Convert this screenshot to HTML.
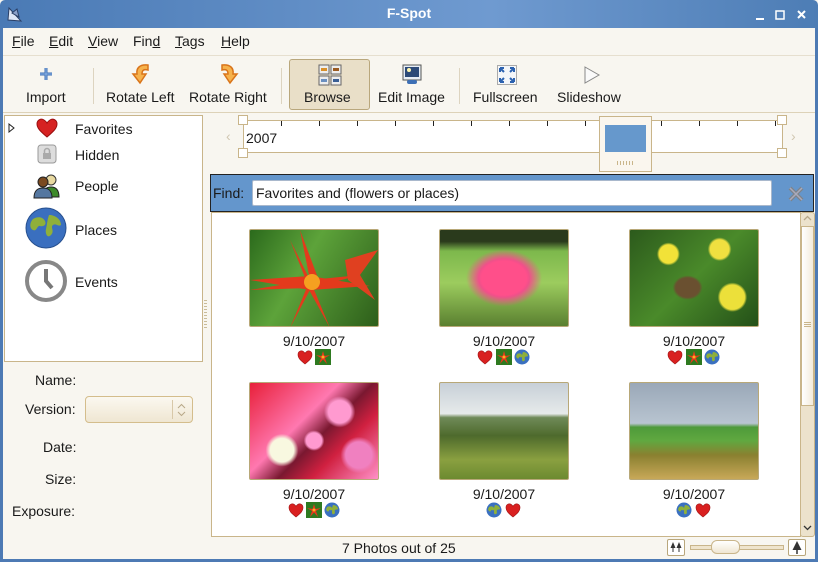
<!DOCTYPE html>
<html><head><meta charset="utf-8"><style>
*{margin:0;padding:0;box-sizing:border-box}
body{width:818px;height:562px;overflow:hidden;background:#f8f6f0;font-family:"Liberation Sans","DejaVu Sans",sans-serif;font-size:14px;color:#1a1a1a;position:relative}
.a{position:absolute}
.title{left:0;top:0;width:818px;height:28px;background:linear-gradient(90deg,#4a7ab5,#6f9ad0 60%,#4d7db5);color:#fff;font-weight:bold;font-size:14px;text-align:center;line-height:26px;border-radius:5px 5px 0 0}
.lb{left:0;top:28px;width:3px;height:534px;background:#4d7ab4}
.rb{right:0;top:28px;width:3px;height:534px;background:#4d7ab4}
.bb{left:0;bottom:0;width:818px;height:3px;background:#4d7ab4}
.menu span{position:absolute;top:33px}
u{text-decoration:underline}
.tb{top:55px;left:3px;width:812px;height:58px;border-top:1px solid #e6dfcf;border-bottom:1px solid #ddd2b8}
.tl{position:absolute;top:89px;font-size:14px;white-space:nowrap}
.sep{position:absolute;top:68px;width:1px;height:36px;background:#ddd4c0}
.panel{left:4px;top:115px;width:199px;height:247px;background:#fff;border:1px solid #c9b58a}
.photo{position:absolute;width:130px;height:98px;border:1px solid #b8a878;border-radius:2px;overflow:hidden}
.date{position:absolute;width:130px;text-align:center;font-size:14px}
.ic{position:absolute;width:16px;height:16px}
</style></head><body>
<div class="a title">F-Spot</div>
<svg class="a" style="left:6px;top:5px" width="18" height="18" viewBox="0 0 18 18"><path d="M3 3 L15 16 L2 15 Z" fill="#dde6f5" stroke="#2a3f66" stroke-width="1"/><path d="M6 8 L11 4 L13 12Z" fill="#8aa0c8" stroke="#2a3f66"/></svg>
<svg class="a" style="left:755px;top:8px" width="58" height="14" viewBox="0 0 58 14"><path d="M1 11h8" stroke="#fff" stroke-width="2"/><rect x="21" y="3" width="8" height="8" fill="none" stroke="#fff" stroke-width="1.5"/><path d="M43 3l7 7M50 3l-7 7" stroke="#fff" stroke-width="2"/></svg>
<div class="a lb"></div><div class="a rb"></div><div class="a bb"></div>
<div class="menu">
<span style="left:12px"><u>F</u>ile</span><span style="left:49px"><u>E</u>dit</span><span style="left:88px"><u>V</u>iew</span><span style="left:133px">Fin<u>d</u></span><span style="left:175px"><u>T</u>ags</span><span style="left:221px"><u>H</u>elp</span>
</div>
<div class="a tb"></div>
<div class="a" style="left:289px;top:59px;width:81px;height:51px;background:#e9dfc8;border:1px solid #b9a77c;border-radius:3px"></div>
<svg class="a" style="left:38px;top:66px" width="16" height="16"><path d="M8 2v12M2 8h12" stroke="#3d6fb5" stroke-width="3"/><path d="M8 2v12M2 8h12" stroke="#8fb5e6" stroke-width="1"/></svg>
<svg class="a" style="left:130px;top:62px" width="22" height="24" viewBox="0 0 22 24"><path d="M18 3 C10 2 6 6 7 12 L3 12 L10 21 L16 12 L12 12 C12 8 14 7 18 8Z" fill="#f6b24c" stroke="#d9741a" stroke-width="1.5"/></svg>
<svg class="a" style="left:218px;top:62px" width="22" height="24" viewBox="0 0 22 24"><path d="M4 3 C12 2 16 6 15 12 L19 12 L12 21 L6 12 L10 12 C10 8 8 7 4 8Z" fill="#f6b24c" stroke="#d9741a" stroke-width="1.5"/></svg>
<svg class="a" style="left:318px;top:64px" width="24" height="22"><rect x="1" y="1" width="10" height="9" fill="#eee" stroke="#666"/><rect x="13" y="1" width="10" height="9" fill="#eee" stroke="#666"/><rect x="1" y="12" width="10" height="9" fill="#eee" stroke="#666"/><rect x="13" y="12" width="10" height="9" fill="#eee" stroke="#666"/><rect x="3" y="4" width="6" height="3" fill="#d9902a"/><rect x="15" y="4" width="6" height="3" fill="#9b5a20"/><rect x="3" y="15" width="6" height="3" fill="#6a8fbf"/><rect x="15" y="15" width="6" height="3" fill="#3a5e94"/></svg>
<svg class="a" style="left:402px;top:64px" width="20" height="22"><rect x="1" y="1" width="18" height="15" fill="#e8eef5" stroke="#555"/><rect x="3" y="3" width="14" height="10" fill="#2c4a78"/><circle cx="7" cy="6" r="2" fill="#fff7b0"/><rect x="5" y="16" width="10" height="4" rx="2" fill="#3d6fb5"/></svg>
<svg class="a" style="left:497px;top:65px" width="20" height="20"><rect x="0.5" y="0.5" width="19" height="19" fill="#f4f6f9" stroke="#aaa"/><path d="M3 3l4 4M3 3h4M3 3v4M17 3l-4 4M17 3h-4M17 3v4M3 17l4-4M3 17h4M3 17v-4M17 17l-4-4M17 17h-4M17 17v-4" stroke="#2c62b0" stroke-width="2"/></svg>
<svg class="a" style="left:583px;top:65px" width="18" height="20"><path d="M2 2L16 10L2 18Z" fill="#fafafa" stroke="#888"/></svg>
<span class="tl" style="left:26px">Import</span>
<span class="sep" style="left:93px"></span>
<span class="tl" style="left:106px">Rotate Left</span>
<span class="tl" style="left:189px">Rotate Right</span>
<span class="sep" style="left:281px"></span>
<span class="tl" style="left:304px">Browse</span>
<span class="tl" style="left:378px">Edit Image</span>
<span class="sep" style="left:459px"></span>
<span class="tl" style="left:473px">Fullscreen</span>
<span class="tl" style="left:557px">Slideshow</span>

<div class="a panel"></div>
<svg class="a" style="left:8px;top:123px" width="7" height="10"><path d="M1 1L6 5L1 9Z" fill="#fff" stroke="#222"/></svg>
<svg class="a" style="left:36px;top:118px" width="22" height="20" viewBox="0 0 22 20"><path d="M11 19 C4 13 1 10 1 6 C1 2 5 0 8 2 C9.5 3 10.5 4 11 5 C11.5 4 12.5 3 14 2 C17 0 21 2 21 6 C21 10 18 13 11 19Z" fill="#d62222" stroke="#9a1010"/></svg>
<svg class="a" style="left:37px;top:144px" width="20" height="20"><rect x="1" y="1" width="18" height="18" rx="3" fill="#ddd" stroke="#999"/><rect x="6" y="9" width="8" height="6" fill="#aaa"/><path d="M7.5 9V7a2.5 2.5 0 0 1 5 0v2" fill="none" stroke="#aaa" stroke-width="1.5"/></svg>
<svg class="a" style="left:32px;top:171px" width="28" height="28"><circle cx="19" cy="9" r="5" fill="#e8d9a0" stroke="#333"/><path d="M11 26c0-8 4-10 8-10s8 2 8 10z" fill="#3d8a2a" stroke="#222"/><circle cx="11" cy="11" r="5" fill="#7a4a20" stroke="#222"/><path d="M2 27c0-8 4-10 9-10s9 2 9 10z" fill="#5577a0" stroke="#222"/></svg>
<svg class="a" style="left:25px;top:207px" width="42" height="42"><circle cx="21" cy="21" r="20" fill="#3a6fbf" stroke="#27508f"/><path d="M8 12c5-3 10-2 12 2s-2 6-5 5-3 6-7 4-3-8 0-11zM24 8c6 0 12 4 12 10-3 2-5-2-8 0s2 6-2 10-6-2-5-6 1-8 3-14z" fill="#8fb03a"/></svg>
<svg class="a" style="left:25px;top:260px" width="42" height="42"><circle cx="21" cy="21" r="19" fill="#fff" stroke="#888" stroke-width="4"/><path d="M21 9v12l6 7" stroke="#777" stroke-width="4" fill="none"/></svg>
<span class="a" style="left:75px;top:121px">Favorites</span>
<span class="a" style="left:75px;top:147px">Hidden</span>
<span class="a" style="left:75px;top:178px">People</span>
<span class="a" style="left:75px;top:222px">Places</span>
<span class="a" style="left:75px;top:274px">Events</span>

<span class="a" style="left:35px;top:372px">Name:</span>
<span class="a" style="left:25px;top:401px">Version:</span>
<div class="a" style="left:85px;top:396px;width:108px;height:27px;border:1px solid #d4bd8c;border-radius:4px;background:linear-gradient(#fbf8f0,#efe6d2)"></div>
<div class="a" style="left:172px;top:400px;width:1px;height:19px;background:#d8c8a8"></div>
<svg class="a" style="left:177px;top:403px" width="9" height="14"><path d="M1 5l3.5-3.5L8 5M1 9l3.5 3.5L8 9" fill="none" stroke="#b8a888"/></svg>
<span class="a" style="left:43px;top:439px">Date:</span>
<span class="a" style="left:45px;top:471px">Size:</span>
<span class="a" style="left:12px;top:503px">Exposure:</span>
<div class="a" style="left:204px;top:300px;width:3px;height:30px;background:repeating-linear-gradient(#c9bb98 0 1px,transparent 1px 3px)"></div>

<span class="a" style="left:226px;top:128px;color:#d0c6b0;font-size:14px">‹</span>
<span class="a" style="left:791px;top:128px;color:#d0c6b0;font-size:14px">›</span>
<div class="a" style="left:243px;top:120px;width:540px;height:33px;background:#fff;border:1px solid #c9b58a"></div>
<div class="a" style="left:244px;top:121px;width:538px;height:5px;background:repeating-linear-gradient(90deg,transparent 0 37px,#222 37px 38px)"></div>
<span class="a" style="left:246px;top:130px">2007</span>
<div class="a" style="left:238px;top:115px;width:10px;height:10px;background:#fff;border:1px solid #c9b58a"></div>
<div class="a" style="left:238px;top:148px;width:10px;height:10px;background:#fff;border:1px solid #c9b58a"></div>
<div class="a" style="left:777px;top:115px;width:10px;height:10px;background:#fff;border:1px solid #c9b58a"></div>
<div class="a" style="left:777px;top:148px;width:10px;height:10px;background:#fff;border:1px solid #c9b58a"></div>
<div class="a" style="left:599px;top:116px;width:53px;height:56px;background:#faf6ee;border:1px solid #c9b58a"></div>
<div class="a" style="left:605px;top:125px;width:41px;height:27px;background:#6698cc"></div>
<div class="a" style="left:617px;top:161px;width:16px;height:4px;background:repeating-linear-gradient(90deg,#c9b58a 0 1px,transparent 1px 3px)"></div>

<div class="a" style="left:210px;top:174px;width:604px;height:38px;background:#6496cc;border:1px solid #222"></div>
<span class="a" style="left:213px;top:185px">Find:</span>
<div class="a" style="left:252px;top:180px;width:520px;height:26px;background:#fff;border:1px solid #a9b8cc;border-radius:2px"></div>
<span class="a" style="left:256px;top:185px">Favorites and (flowers or places)</span>
<svg class="a" style="left:787px;top:185px" width="18" height="18"><path d="M3 3L15 15M15 3L3 15" stroke="#7d838a" stroke-width="4"/><path d="M3 3L15 15M15 3L3 15" stroke="#aab" stroke-width="1.5"/></svg>

<div class="a" style="left:211px;top:212px;width:590px;height:325px;background:#fff;border:1px solid #c9b58a"></div>
<div class="a" style="left:800px;top:212px;width:15px;height:325px;background:#ece2cc;border:1px solid #c9b58a;border-radius:3px"></div>
<div class="a" style="left:801px;top:226px;width:13px;height:180px;background:linear-gradient(90deg,#fff,#f3ebdb);border:1px solid #c9b58a"></div>
<svg class="a" style="left:803px;top:215px" width="9" height="7"><path d="M1 5l3.5-3.5L8 5" fill="none" stroke="#b8a888" stroke-width="1.3"/></svg>
<svg class="a" style="left:803px;top:524px" width="9" height="7"><path d="M1 2l3.5 3.5L8 2" fill="none" stroke="#333" stroke-width="1.3"/></svg>
<div class="a" style="left:804px;top:322px;width:7px;height:6px;background:repeating-linear-gradient(#c9b58a 0 1px,transparent 1px 2px)"></div>

<div class="photo" style="left:249px;top:229px;background:linear-gradient(120deg,#2b6a1c,#5da33a 40%,#2d5e1a)">
<svg width="130" height="98" viewBox="0 0 130 98"><g fill="#e33a1c"><path d="M60 50 L0 60 L58 58Z"/><path d="M60 50 L50 0 L68 48Z"/><path d="M60 50 L40 10 L56 50Z"/><path d="M60 50 L110 45 L62 58Z"/><path d="M60 50 L80 98 L58 58Z"/><path d="M60 50 L40 98 L62 56Z"/><path d="M60 46 L0 50 L60 60 L120 56Z"/></g><circle cx="62" cy="52" r="8" fill="#f5a020"/><path d="M95 30 L128 20 L110 45 L125 70 L98 50Z" fill="#e04020"/></svg></div>
<div class="photo" style="left:439px;top:229px;background:radial-gradient(ellipse at 50% 50%,#ff4f8a 0 25%,#f0508a 28%,transparent 42%),linear-gradient(#2a3a1c 0 12%,#7db84c 22%,#9ccc5e 55%,#5a8030)"></div>
<div class="photo" style="left:629px;top:229px;background:radial-gradient(ellipse at 45% 60%,#6a5030 0 12%,transparent 15%),radial-gradient(circle at 30% 25%,#f2e238 0 8%,transparent 10%),radial-gradient(circle at 80% 70%,#ece03a 0 10%,transparent 12%),radial-gradient(circle at 70% 20%,#f0e040 0 8%,transparent 10%),linear-gradient(135deg,#2c5a1c,#4a8a2a 50%,#245018)"></div>
<div class="photo" style="left:249px;top:382px;background:radial-gradient(circle at 25% 70%,#f8f8e0 0 10%,transparent 14%),radial-gradient(circle at 70% 30%,#ff9ad0 0 10%,transparent 14%),radial-gradient(circle at 50% 60%,#ff9ad0 0 9%,transparent 12%),radial-gradient(circle at 85% 75%,#f080c0 0 10%,transparent 14%),linear-gradient(135deg,#e8203a,#ff78b0 40%,#7a1830 55%,#d02040 70%,#ff90c8)"></div>
<div class="photo" style="left:439px;top:382px;background:linear-gradient(#c7d0d8 0,#e6eaea 32%,#6f8a58 36%,#4e6a2c 55%,#8aa040 80%,#6c8a30)"></div>
<div class="photo" style="left:629px;top:382px;background:linear-gradient(#9aa8b8 0,#b8c4d0 42%,#4e9a3a 46%,#60a840 60%,#8a8030 75%,#c8a858)"></div>

<div class="date" style="left:249px;top:333px">9/10/2007</div>
<div class="date" style="left:439px;top:333px">9/10/2007</div>
<div class="date" style="left:629px;top:333px">9/10/2007</div>
<div class="date" style="left:249px;top:486px">9/10/2007</div>
<div class="date" style="left:439px;top:486px">9/10/2007</div>
<div class="date" style="left:629px;top:486px">9/10/2007</div>

<svg width="0" height="0" style="position:absolute"><defs>
<symbol id="h" viewBox="0 0 16 16"><path d="M8 15C3 11 1 9 1 5.5 1 2.5 4 1 6 2.3 7 3 7.6 3.6 8 4.3 8.4 3.6 9 3 10 2.3 12 1 15 2.5 15 5.5 15 9 13 11 8 15Z" fill="#d92020" stroke="#a01414" stroke-width=".6"/></symbol>
<symbol id="f" viewBox="0 0 16 16"><rect width="16" height="16" fill="#2e7a20"/><path d="M8 2L9.5 7 15 6 10 9 12 15 8 10.5 4 15 6 9 1 6 6.5 7Z" fill="#e8381c"/><circle cx="8" cy="8" r="1.5" fill="#f8b020"/></symbol>
<symbol id="g" viewBox="0 0 16 16"><circle cx="8" cy="8" r="7.5" fill="#3a70c0"/><path d="M3 5c2-1 4-1 5 1s-1 3-2 2-1 3-3 1 0-3 0-4zM9 3c3 0 5 2 5 4-1 1-2 0-3 1s1 3-1 4-2-1-2-3 0-4 1-6z" fill="#8fb03a"/></symbol>
</defs></svg>
<svg class="ic" style="left:297px;top:349px"><use href="#h"/></svg>
<svg class="ic" style="left:315px;top:349px"><use href="#f"/></svg>
<svg class="ic" style="left:477px;top:349px"><use href="#h"/></svg>
<svg class="ic" style="left:496px;top:349px"><use href="#f"/></svg>
<svg class="ic" style="left:514px;top:349px"><use href="#g"/></svg>
<svg class="ic" style="left:667px;top:349px"><use href="#h"/></svg>
<svg class="ic" style="left:686px;top:349px"><use href="#f"/></svg>
<svg class="ic" style="left:704px;top:349px"><use href="#g"/></svg>
<svg class="ic" style="left:288px;top:502px"><use href="#h"/></svg>
<svg class="ic" style="left:306px;top:502px"><use href="#f"/></svg>
<svg class="ic" style="left:324px;top:502px"><use href="#g"/></svg>
<svg class="ic" style="left:486px;top:502px"><use href="#g"/></svg>
<svg class="ic" style="left:505px;top:502px"><use href="#h"/></svg>
<svg class="ic" style="left:676px;top:502px"><use href="#g"/></svg>
<svg class="ic" style="left:695px;top:502px"><use href="#h"/></svg>

<span class="a" style="left:342px;top:540px">7 Photos out of 25</span>
<div class="a" style="left:667px;top:539px;width:18px;height:17px;border:1px solid #b9a77c;border-radius:2px;background:#fff"></div>
<svg class="a" style="left:670px;top:542px" width="12" height="11"><path d="M3 0L0.5 6h5zM9 0L6.5 6h5z" fill="#333"/><path d="M3 6v4M9 6v4" stroke="#333"/></svg>
<div class="a" style="left:690px;top:545px;width:94px;height:5px;border:1px solid #c9b58a;background:#efe4cc"></div>
<div class="a" style="left:711px;top:540px;width:29px;height:14px;border:1px solid #c9b58a;border-radius:6px;background:linear-gradient(#fff,#efe6d2)"></div>
<div class="a" style="left:788px;top:539px;width:18px;height:17px;border:1px solid #b9a77c;border-radius:2px;background:#fff"></div>
<svg class="a" style="left:792px;top:541px" width="10" height="13"><path d="M5 0L0.5 9h9z" fill="#333"/><path d="M5 9v4" stroke="#333" stroke-width="1.5"/></svg>
</body></html>
